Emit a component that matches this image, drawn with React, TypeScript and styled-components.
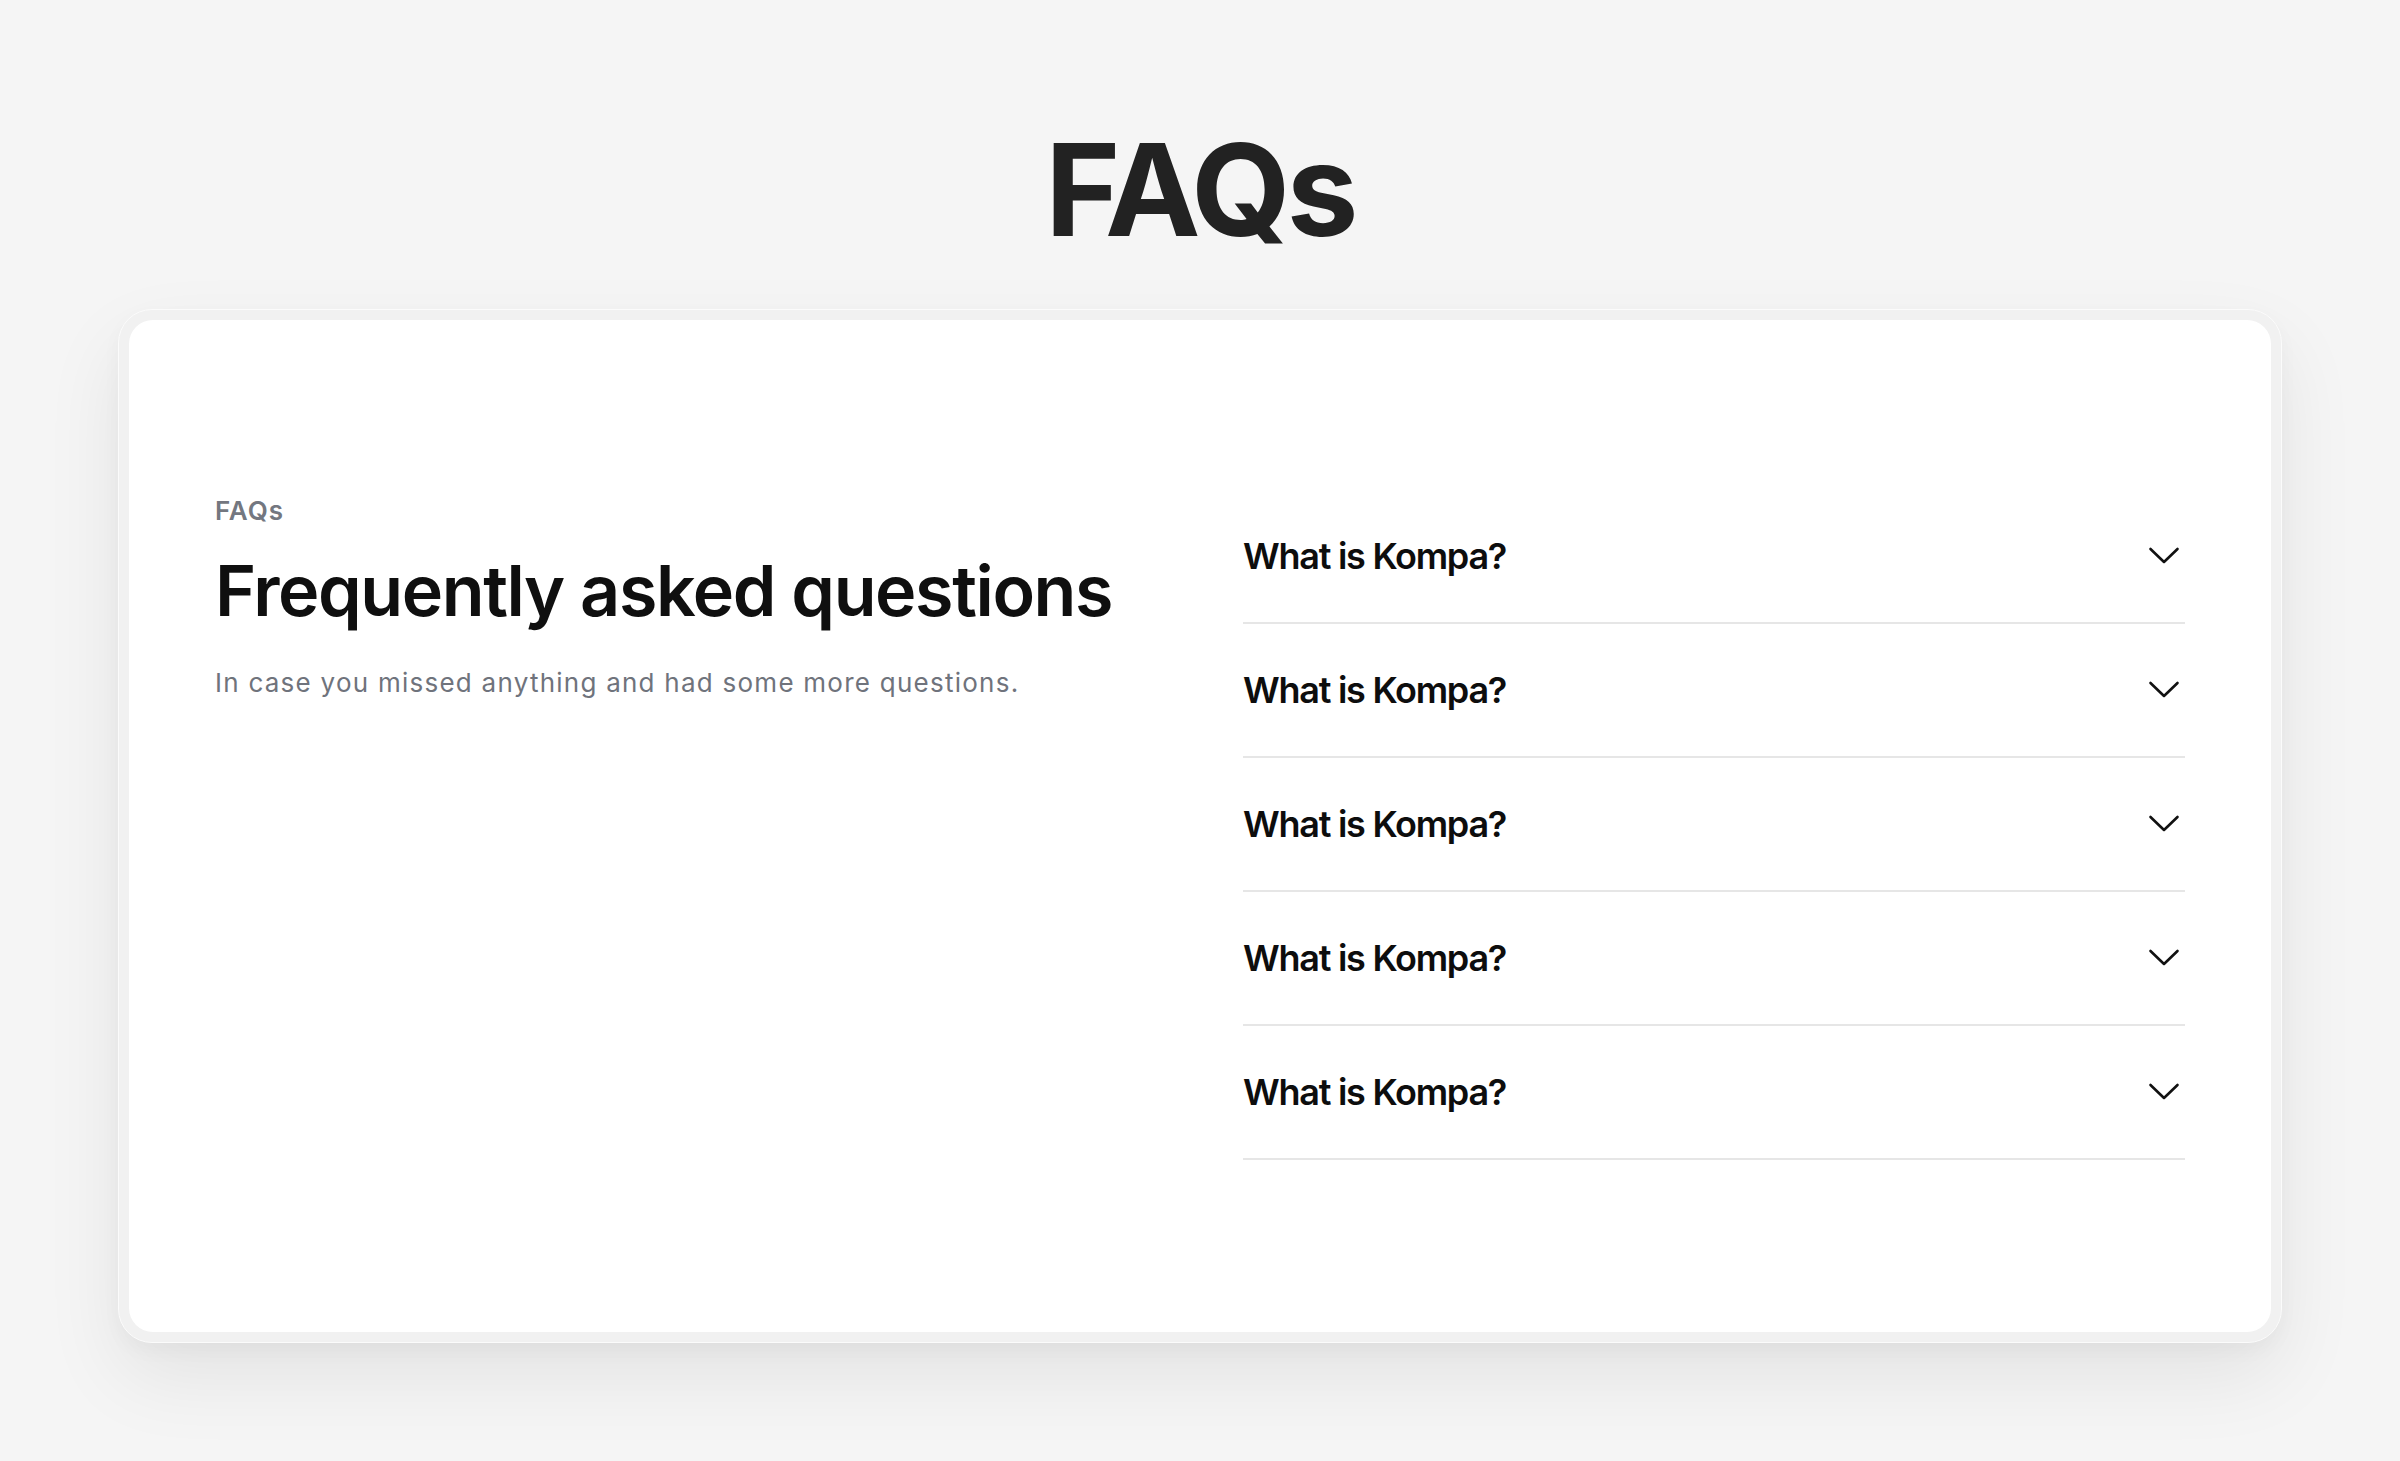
import React from "react";
import styled, { createGlobalStyle } from "styled-components";

const GlobalStyle = createGlobalStyle`
  * { box-sizing: border-box; }
  html, body { margin: 0; padding: 0; background: #f5f5f5; }
  body {
    font-family: Inter, "Noto Sans", "Liberation Sans", sans-serif;
    -webkit-font-smoothing: antialiased;
  }
`;

const Page = styled.main`
  min-height: 100vh;
  padding: 126px 118px 117px;
  display: flex;
  flex-direction: column;
  align-items: center;
`;

const PageTitle = styled.h1`
  margin: 0;
  font-size: 128px;
  line-height: 128px;
  font-weight: 700;
  letter-spacing: -0.03em;
  color: #222222;
`;

const CardFrame = styled.section`
  margin-top: 55px;
  width: 100%;
  max-width: 2165px;
  padding: 10px;
  border-radius: 34px;
  background: #f1f1f1;
  border: 1px solid #fbfbfb;
  box-shadow: 0 34px 80px rgba(0, 0, 0, 0.075), 0 8px 20px rgba(0, 0, 0, 0.03);
`;

const Card = styled.div`
  background: #ffffff;
  border-radius: 24px;
  padding: 170px 86px 172px;
  display: grid;
  grid-template-columns: 1fr 1fr;
  column-gap: 86px;
  align-items: start;
`;

const Intro = styled.div`
  display: flex;
  flex-direction: column;
  padding-top: 3px;
`;

const Eyebrow = styled.span`
  font-size: 26px;
  line-height: 36px;
  font-weight: 600;
  letter-spacing: 0.035em;
  color: #737780;
`;

const Heading = styled.h2`
  margin: 20px 0 0;
  font-size: 70px;
  line-height: 84px;
  font-weight: 600;
  letter-spacing: -0.02em;
  color: #0f0f0f;
`;

const Subtitle = styled.p`
  margin: 32px 0 0;
  font-size: 26px;
  line-height: 36px;
  font-weight: 400;
  letter-spacing: 0.048em;
  color: #6f737c;
`;

const List = styled.div`
  display: flex;
  flex-direction: column;
`;

const Row = styled.button`
  all: unset;
  display: flex;
  align-items: center;
  justify-content: space-between;
  padding: 45px 0;
  border-bottom: 2px solid #e6e6e6;
  cursor: pointer;
`;

const Question = styled.span`
  font-size: 36px;
  line-height: 36px;
  font-weight: 600;
  letter-spacing: -0.035em;
  color: #0d0d0d;
`;

const IconBox = styled.span`
  display: flex;
  width: 42px;
  height: 42px;
  color: #111;
`;

const Chevron = () => (
  <svg width="42" height="42" viewBox="0 0 42 42" fill="none">
    <path
      d="M7.5 14 L21 27 L34.5 14"
      stroke="currentColor"
      strokeWidth="2.6"
      strokeLinecap="round"
      strokeLinejoin="round"
    />
  </svg>
);

const questions = Array.from({ length: 5 }, () => "What is Kompa?");

export default function App() {
  return (
    <>
      <GlobalStyle />
      <Page>
        <PageTitle>FAQs</PageTitle>
        <CardFrame>
          <Card>
            <Intro>
              <Eyebrow>FAQs</Eyebrow>
              <Heading>Frequently asked questions</Heading>
              <Subtitle>In case you missed anything and had some more questions.</Subtitle>
            </Intro>
            <List>
              {questions.map((q, i) => (
                <Row key={i} type="button">
                  <Question>{q}</Question>
                  <IconBox>
                    <Chevron />
                  </IconBox>
                </Row>
              ))}
            </List>
          </Card>
        </CardFrame>
      </Page>
    </>
  );
}
